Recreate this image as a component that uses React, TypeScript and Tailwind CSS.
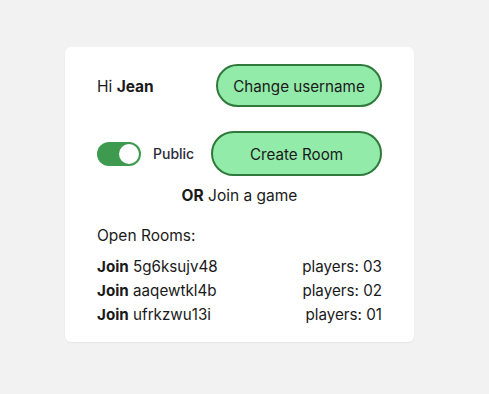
import { useState } from "react";

const ROOMS = [
  { id: "5g6ksujv48", players: "03" },
  { id: "aaqewtkl4b", players: "02" },
  { id: "ufrkzwu13i", players: "01" },
];

export default function App() {
  const [isPublic, setIsPublic] = useState(true);

  return (
    <div
      className="min-h-screen bg-[#f2f2f2] pl-[65px] pt-[47px] text-[#1a1a1a]"
      style={{ fontFamily: "Inter, 'Noto Sans', sans-serif" }}
    >
      <div className="w-[349px] rounded-md bg-white px-8 pt-[17px] pb-[15px] shadow-[0_1px_2px_rgba(0,0,0,0.06)]">
        <div className="flex items-center justify-between">
          <span className="mt-[2px] text-[15.5px]">
            Hi <b>Jean</b>
          </span>
          <button className="h-[43px] w-[166px] rounded-full border-2 border-[#2f7a3a] bg-[#92eba9] pt-[3px] text-[15.2px]">
            Change username
          </button>
        </div>

        <div className="mt-6 flex items-center justify-between">
          <div className="flex items-center gap-3">
            <button
              onClick={() => setIsPublic(!isPublic)}
              className="flex h-6 w-11 items-center rounded-full bg-[#3e9a4e] p-[2px]"
            >
              <span className="ml-auto h-5 w-5 rounded-full bg-white" />
            </button>
            <span className="text-[14px] font-medium text-[#2a2a38]">Public</span>
          </div>
          <button className="h-[45px] w-[171px] rounded-full border-2 border-[#2f7a3a] bg-[#92eba9] pt-[3px] text-[15.2px]">
            Create Room
          </button>
        </div>

        <div className="mt-[8px] text-center text-[15.5px] leading-6">
          <b>OR</b> Join a game
        </div>

        <div className="mt-[16px] text-[15.5px] leading-6">Open Rooms:</div>

        <div className="mt-[7px] text-[15.2px] leading-6">
          {ROOMS.map((r) => (
            <div key={r.id} className="flex justify-between">
              <span>
                <b>Join</b> {r.id}
              </span>
              <span>players: {r.players}</span>
            </div>
          ))}
        </div>
      </div>
    </div>
  );
}
